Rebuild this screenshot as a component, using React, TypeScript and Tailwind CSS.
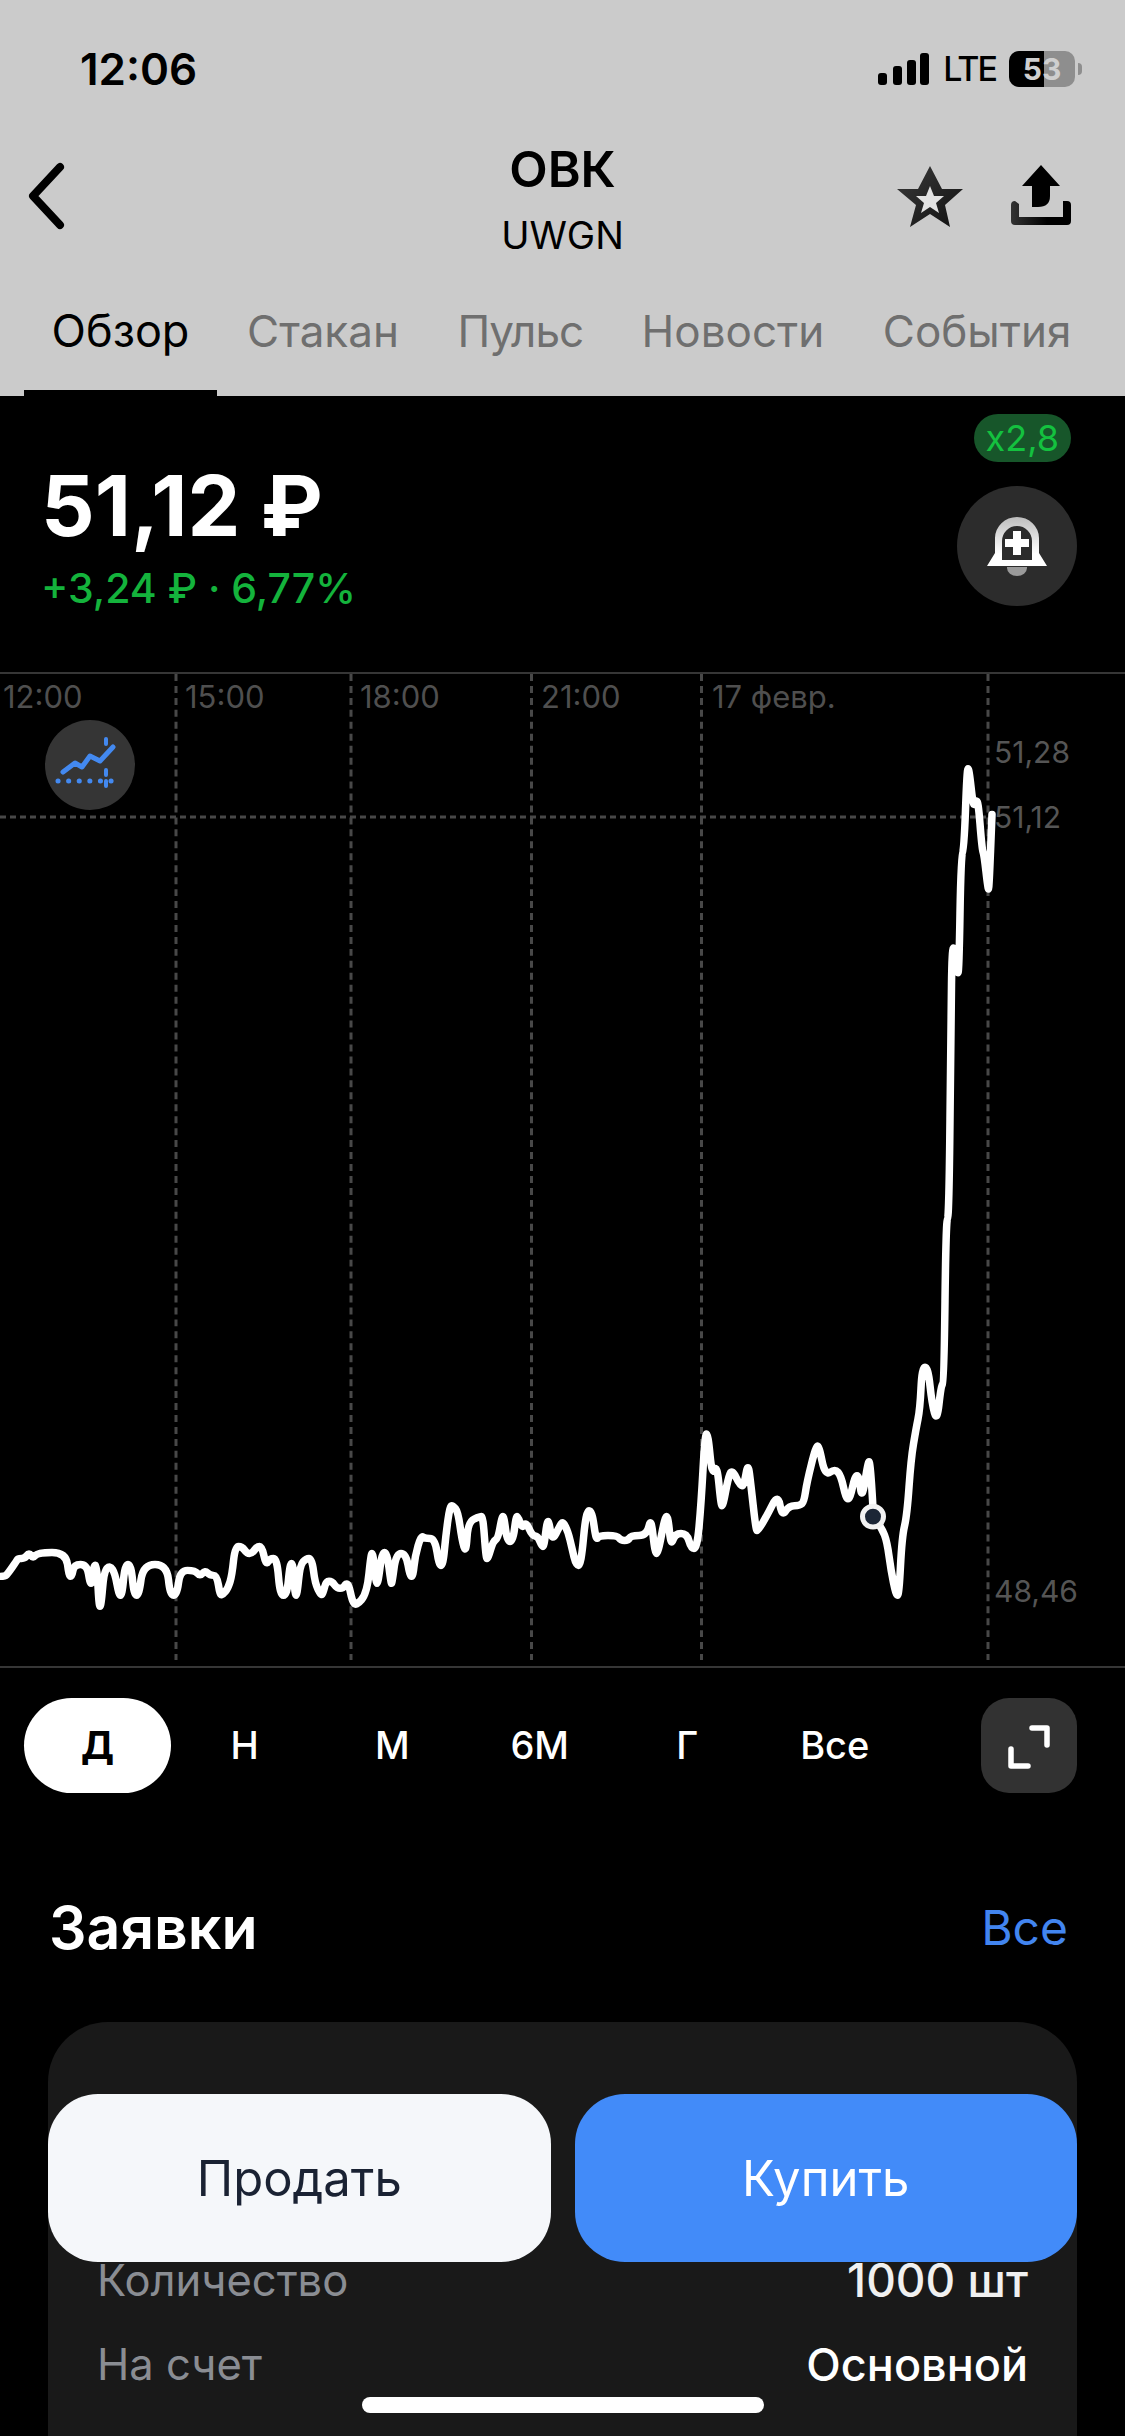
const tabs = ['Обзор', 'Стакан', 'Пульс', 'Новости', 'События'];
const periods = ['Д', 'Н', 'М', '6М', 'Г', 'Все'];
const gridX = [176, 351, 531.5, 701.5, 988];

const timeLabels = [
  { text: '12:00', cls: 'left-[3px]' },
  { text: '15:00', cls: 'left-[185px]' },
  { text: '18:00', cls: 'left-[360px]' },
  { text: '21:00', cls: 'left-[541px]' },
  { text: '17 февр.', cls: 'left-[712px]' },
];

const line =
  '0,1578 5,1578 8,1575 17,1562 18,1560 25,1560 29,1554 33,1560 38,1554 66,1554 69,1578 72,1578 74,1566 87,1566 90,1585 92,1585 94,1566 97,1568 99,1608 101,1608 104,1573 110,1567 115,1575 119,1597 122,1597 125,1566 131,1566 134,1597 139,1597 143,1566 167,1566 170,1597 177,1597 180,1572 195,1572 200,1578 205,1572 210,1577 217,1577 220,1597 223,1596 228,1590 232,1577 235,1548 242,1548 247,1555 252,1555 257,1548 262,1548 266,1567 270,1560 277,1560 280,1597 287,1597 290,1565 293,1565 295,1597 297,1597 300,1567 306,1560 312,1560 315,1585 321,1597 323,1595 326,1583 332,1583 337,1590 343,1590 346,1585 349,1587 352,1602 356,1608 367,1595 371,1555 373,1555 376,1585 378,1585 382,1554 387,1554 391,1585 392,1585 396,1555 406,1555 410,1578 413,1578 415,1558 421,1537 425,1540 435,1540 439,1567 443,1567 446,1535 450,1507 453,1507 458,1513 462,1542 466,1555 468,1523 480,1518 483,1518 486,1560 488,1560 493,1543 498,1540 502,1518 504,1518 507,1543 513,1543 516,1518 518,1518 522,1530 526,1523 532,1537 538,1538 542,1548 544,1548 547,1523 549,1523 552,1543 560,1527 563,1523 568,1533 572,1550 576,1567 581,1567 586,1512 592,1512 596,1542 599,1537 617,1537 621,1542 628,1542 631,1537 647,1537 651,1518 655,1555 658,1555 665,1518 668,1518 671,1548 675,1535 687,1535 691,1550 697,1550 701,1507 705,1435 708,1435 712,1477 717,1465 721,1507 723,1507 728,1480 732,1470 740,1487 744,1487 748,1463 751,1487 756,1532 758,1532 767,1517 778,1495 782,1518 789,1507 800,1507 804,1503 807,1483 816,1447 819,1447 825,1477 835,1470 841,1477 846,1500 850,1500 855,1477 859,1477 862,1502 868,1463 870,1463 873,1507 873,1518 882,1530 887,1543 891,1572 896,1597 899,1597 902,1538 907,1517 911,1460 916,1430 920,1410 922,1368 928,1368 932,1405 937,1423 941,1387 944,1383 946,1220 949,1218 951,1020 952,947 955,947 957,972 959,972 961,853 964,850 967,767 969,767 973,803 975,803 978,797 982,848 984,853 988,888 989,888 992,813';

// rounds the corners of the price line, the source looks spline-ish
function smoothPath(raw: string) {
  const pts = raw.split(' ').map((p) => p.split(',').map(Number));
  let d = `M${pts[0][0]} ${pts[0][1]}`;
  for (let i = 1; i < pts.length - 1; i++) {
    const mx = (pts[i][0] + pts[i + 1][0]) / 2;
    const my = (pts[i][1] + pts[i + 1][1]) / 2;
    d += ` Q${pts[i][0]} ${pts[i][1]} ${mx} ${my}`;
  }
  const last = pts[pts.length - 1];
  return `${d} L${last[0]} ${last[1]}`;
}

function StatusBar() {
  return (
    <div className="h-[130px] flex items-start justify-between pl-[80px] pr-[43px] pt-[44px]">
      <span className="text-[44px] leading-[50px] font-semibold text-black">12:06</span>
      <div className="flex items-center gap-[13px] pt-[7px]">
        <svg width="52" height="32" viewBox="0 0 52 32" fill="black">
          <rect x="0" y="20" width="9" height="12" rx="3" />
          <rect x="15" y="13" width="9" height="19" rx="3" />
          <rect x="29" y="7" width="9" height="25" rx="3" />
          <rect x="42" y="0" width="9" height="32" rx="3" />
        </svg>
        <span className="text-[34px] leading-[36px] font-medium tracking-[-2px] text-black">LTE</span>
        <div className="flex items-center gap-[3px]">
          <div className="w-[66px] h-[36px] rounded-[10px] overflow-hidden flex bg-[#8e8e8e] relative">
            <div className="w-[35px] h-full bg-black" />
            <span className="absolute inset-0 flex items-center justify-center text-[30px] font-bold text-[#cfcfcf] leading-none">
              53
            </span>
          </div>
          <div className="w-[4px] h-[12px] rounded-r-full bg-[#8e8e8e]" />
        </div>
      </div>
    </div>
  );
}

function NavBar() {
  return (
    <div className="relative h-[130px] flex items-start justify-center">
      <svg className="absolute left-[26px] top-[32px]" width="42" height="68" viewBox="0 0 42 68" fill="none" stroke="black" strokeWidth="8" strokeLinecap="round" strokeLinejoin="round">
        <path d="M34 5 L7 34 L34 63" />
      </svg>
      <div className="flex flex-col items-center">
        <span className="text-[50px] leading-[58px] font-semibold text-black mt-[10px]">ОВК</span>
        <span className="text-[38px] leading-[46px] text-black mt-[14px]">UWGN</span>
      </div>
      <svg className="absolute left-[890px] top-[30px]" width="190" height="74" viewBox="890 160 190 74">
        <defs>
          <linearGradient id="tray" x1="0" x2="1" y1="0" y2="0">
            <stop offset="0" stopColor="#333" />
            <stop offset="0.6" stopColor="#000" />
          </linearGradient>
          <linearGradient id="star" x1="0" x2="1" y1="0" y2="1">
            <stop offset="0" stopColor="#3a3a3a" />
            <stop offset="1" stopColor="#111" />
          </linearGradient>
        </defs>
        <path d="M930 166 L942 189 L963 189 L945 205 L950 227 L930 214 L910 227 L916 205 L897 189 L918 189 Z" fill="url(#star)" />
        <path d="M930 186 L934 196 L944 196 L936 203 L939 213 L930 207 L921 213 L924 203 L916 196 L926 196 Z" fill="#e2e2e2" />
        <path d="M1041 165 L1060 186 L1050 186 L1050 196 Q1050 207 1038 207 L1032 207 L1032 186 L1022 186 Z" fill="black" />
        <path d="M1011 205 Q1011 201 1015 201 L1019 204 L1019 217 L1063 217 L1063 201 L1067 201 Q1071 201 1071 205 L1071 221 Q1071 225 1067 225 L1015 225 Q1011 225 1011 221 Z" fill="url(#tray)" />
      </svg>
    </div>
  );
}

function Tabs() {
  return (
    <div className="h-[136px] flex items-end pl-[24px]">
      {tabs.map((t, i) => (
        <div
          key={t}
          className={
            i === 0
              ? 'w-[193px] h-[95px] pt-[3px] text-center border-b-[6px] border-black text-[45px] leading-[54px] text-black'
              : t === 'Пульс'
                ? 'h-[95px] pt-[3px] pl-[30px] pr-[28.5px] tracking-[-1px] text-[44px] leading-[54px] text-[#6f6f6f]'
                : 'h-[95px] pt-[3px] pl-[30px] pr-[28.5px] text-[44px] leading-[54px] text-[#6f6f6f]'
          }
        >
          {t}
        </div>
      ))}
    </div>
  );
}

function PriceBlock() {
  return (
    <div className="h-[276px] flex justify-between pl-[41px] pr-[48px]">
      <div className="flex flex-col pt-[65px]">
        <span className="text-[84px] leading-[90px] font-bold text-white">51,12 ₽</span>
        <span className="text-[41px] leading-[48px] font-medium text-[#14b33c] mt-[13px]">+3,24 ₽ · 6,77%</span>
      </div>
      <div className="flex flex-col items-end pt-[18px]">
        <div className="h-[48px] px-[12px] mr-[6px] rounded-full bg-[#17562a] text-[#14c13f] text-[36px] leading-[48px]">x2,8</div>
        <div className="mt-[24px] w-[120px] h-[120px] rounded-full bg-[#2c2c2c] flex items-center justify-center">
          <svg width="60" height="60" viewBox="987 516 60 60">
            <defs>
              <linearGradient id="bell" x1="0" x2="0" y1="0" y2="1">
                <stop offset="0" stopColor="#bdbdbd" />
                <stop offset="0.75" stopColor="#fff" />
              </linearGradient>
            </defs>
            <path d="M1007 567 H1027 V568 A10 8 0 0 1 1007 568 Z" fill="#9a9a9a" />
            <path
              fillRule="evenodd"
              fill="url(#bell)"
              d="M987 566 L995 553 L995 538 A22 21 0 0 1 1039 538 L1039 553 L1047 566 Z M1002 560 L1032 560 L1032 541 A15 15 0 0 0 1002 541 Z"
            />
            <path d="M1013 531 H1021 V539 H1029 V547 H1021 V555 H1013 V547 H1005 V539 H1013 Z" fill="white" />
          </svg>
        </div>
      </div>
    </div>
  );
}

function Chart() {
  return (
    <div className="relative h-[996px] border-y-2 border-[#363636]">
      <svg className="absolute inset-0 w-full h-full" viewBox="0 672 1125 996" preserveAspectRatio="none" fill="none">
        {gridX.map((x) => (
          <line key={x} x1={x} x2={x} y1="672" y2="1662" stroke="#484848" strokeWidth="3" strokeDasharray="7 5" />
        ))}
        <line x1="0" x2="988" y1="815.5" y2="815.5" stroke="#484848" strokeWidth="3" strokeDasharray="6 4" />
        <path d={smoothPath(line)} stroke="white" strokeWidth="7.5" strokeLinejoin="round" strokeLinecap="round" />
        <circle cx="873" cy="1518" r="10.5" fill="#1c2636" stroke="#f2f2f2" strokeWidth="5" />
      </svg>
      {timeLabels.map((l) => (
        <span key={l.text} className={`absolute top-[4px] text-[31px] leading-[38px] text-[#4f4f4f] ${l.cls}`}>
          {l.text}
        </span>
      ))}
      <span className="absolute left-[994px] top-[60px] text-[30px] leading-[36px] text-[#555555]">51,28</span>
      <span className="absolute left-[994px] top-[125px] text-[30px] leading-[36px] text-[#555555]">51,12</span>
      <span className="absolute left-[994px] top-[899px] text-[30px] leading-[36px] text-[#555555]">48,46</span>
      <div className="absolute left-[45px] top-[46px] w-[90px] h-[90px] rounded-full bg-[#353535]">
        <svg width="90" height="90" viewBox="45 720 90 90" fill="none" stroke="#4389f0">
          <polyline points="63,772 75,763 82,767 90,756 100,761 113,747" strokeWidth="5" strokeLinejoin="round" strokeLinecap="round" />
          <line x1="58" x2="116" y1="781" y2="781" strokeWidth="5" strokeDasharray="0.1 10.5" strokeLinecap="round" />
          <line x1="106" x2="106" y1="739" y2="744" strokeWidth="4" strokeLinecap="round" />
          <line x1="106" x2="106" y1="770" y2="792" strokeWidth="4" strokeDasharray="5 6" strokeLinecap="round" />
        </svg>
      </div>
    </div>
  );
}

function Periods() {
  return (
    <div className="mt-[30px] h-[95px] flex items-center pl-[24px] pr-[48px]">
      {periods.map((p, i) => (
        <div
          key={p}
          className={
            i === 0
              ? 'w-[147px] h-[95px] rounded-full bg-white flex items-center justify-center text-[38px] font-bold text-black'
              : 'w-[147.5px] h-[95px] flex items-center justify-center text-[38px] font-medium text-white'
          }
        >
          {p}
        </div>
      ))}
      <div className="ml-auto w-[96px] h-[95px] rounded-[28px] bg-[#323232] flex items-center justify-center">
        <svg width="50" height="50" viewBox="1003 1720 50 50" fill="none" stroke="white" strokeWidth="5.5" strokeLinecap="round" strokeLinejoin="round">
          <path d="M1031 1727 H1046 V1744" />
          <path d="M1010 1748 V1765 H1027" />
        </svg>
      </div>
    </div>
  );
}

function Orders() {
  return (
    <>
      <div className="mt-[100px] flex items-center justify-between pl-[49px] pr-[57px] h-[70px]">
        <span className="text-[59px] font-semibold text-white">Заявки</span>
        <span className="text-[48px] text-[#4285f0]">Все</span>
      </div>
      <div className="mt-[59px] mx-[48px] h-[500px] rounded-[60px] bg-[#191919] px-[49px] pt-[216px]">
        <div className="h-[85px] flex items-center justify-between text-[43.5px]">
          <span className="text-[#8a8d93]">Количество</span>
          <span className="text-[#f0f0f0] text-[46px] font-medium">1000 шт</span>
        </div>
        <div className="h-[84px] flex items-center justify-between text-[43.5px]">
          <span className="text-[#8a8d93]">На счет</span>
          <span className="text-white text-[45px] font-medium">Основной</span>
        </div>
        <div className="mt-[83px] h-[2px] bg-[#3c3c3c]" />
      </div>
    </>
  );
}

export default function App() {
  return (
    <div className="relative w-[1125px] h-[2436px] overflow-hidden bg-black [font-family:Inter,sans-serif]">
      <div className="h-[396px] bg-[#cbcbcb]">
        <StatusBar />
        <NavBar />
        <Tabs />
      </div>
      <PriceBlock />
      <Chart />
      <Periods />
      <Orders />
      <div className="absolute left-[48px] right-[48px] bottom-[174px] h-[168px] flex gap-[24px]">
        <button className="flex-1 rounded-[50px] bg-[#f5f7fa] pt-[2px] text-[49px] text-[#1a2233]">Продать</button>
        <button className="flex-1 rounded-[50px] bg-[#428bf9] pt-[2px] text-[49px] text-white">Купить</button>
      </div>
      <div className="absolute left-[362px] bottom-[23px] w-[402px] h-[16px] rounded-full bg-white" />
    </div>
  );
}
